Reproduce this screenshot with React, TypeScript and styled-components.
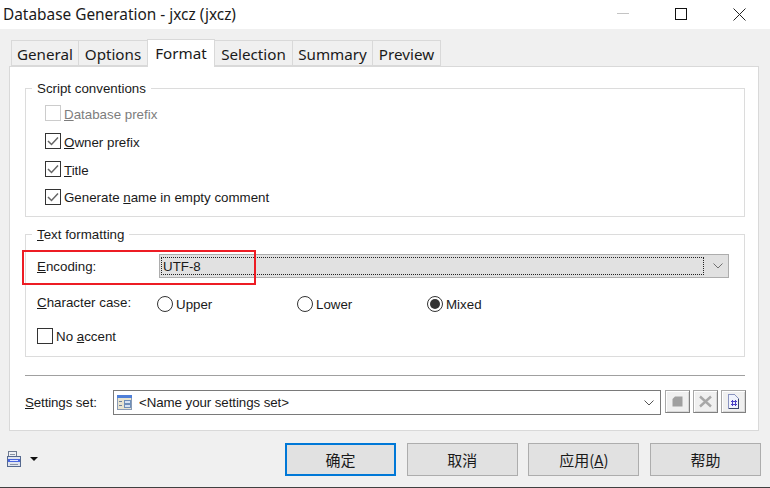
import { FC, ReactNode } from 'react'
import styled, { createGlobalStyle } from 'styled-components'

const GlobalStyle = createGlobalStyle`
    html, body {
        margin: 0;
        padding: 0;
        background: #f0f0f0;
    }
    * {
        box-sizing: border-box;
    }
`

const Dialog = styled.div`
    width: 770px;
    height: 488px;
    display: flex;
    flex-direction: column;
    background: #f0f0f0;
    border-bottom: 1px solid #404040;
    overflow: hidden;
    font-family: 'Liberation Sans', Arial, sans-serif;
    font-size: 13.33px;
    color: #1a1a1a;
`

const TitleBar = styled.div`
    height: 29px;
    flex: none;
    display: flex;
    align-items: center;
    justify-content: space-between;
    background: #fff;
    padding-left: 3px;
`

const TitleText = styled.div`
    font-family: 'Noto Sans', sans-serif;
    font-size: 15.4px;
    line-height: 26px;
    color: #1a1a1a;
`

const WindowButtons = styled.div`
    display: flex;
    align-items: center;
    gap: 46px;
    padding-right: 24px;
    margin-bottom: 1px;
`

const TabStrip = styled.div`
    display: flex;
    align-items: flex-end;
    height: 27px;
    margin-top: 10px;
    padding-left: 12px;
    flex: none;
`

const Tab = styled.div<{ $active?: boolean; $width: number }>`
    width: ${(p) => p.$width}px;
    height: ${(p) => (p.$active ? 28 : 26)}px;
    margin-bottom: ${(p) => (p.$active ? -1 : 0)}px;
    padding-bottom: ${(p) => (p.$active ? 1 : 0)}px;
    padding-top: ${(p) => (p.$active ? 0 : 2)}px;
    display: flex;
    align-items: center;
    justify-content: center;
    background: ${(p) => (p.$active ? '#fff' : '#f0f0f0')};
    border: 1px solid #d9d9d9;
    border-bottom: ${(p) => (p.$active ? 'none' : '1px solid #d9d9d9')};
    margin-left: -1px;
    position: relative;
    z-index: ${(p) => (p.$active ? 1 : 0)};
    font-family: 'Noto Sans', sans-serif;
    font-size: 15.2px;
    color: #1a1a1a;
`

const Panel = styled.div`
    height: 365px;
    flex: none;
    margin: 0 11px 0 9px;
    background: #fff;
    border: 1px solid #d9d9d9;
    padding: 14px 13px 0 15px;
`

const Group = styled.fieldset<{ $height: number }>`
    height: ${(p) => p.$height}px;
    margin: 0;
    padding: 0;
    border: 1px solid #dcdcdc;
    min-width: 0;
`

const GroupTitle = styled.legend`
    margin-left: 6px;
    padding: 0 5px;
    font-size: 13.33px;
    line-height: 15px;
    color: #1a1a1a;
`

const Stack = styled.div`
    display: flex;
    flex-direction: column;
    gap: 12px;
    padding: 9px 0 0 19px;
`

const CheckRow = styled.label<{ $disabled?: boolean }>`
    display: flex;
    align-items: center;
    gap: 3px;
    height: 16px;
    color: ${(p) => (p.$disabled ? '#7d7d7d' : '#1a1a1a')};
`

const CheckText = styled.span<{ $lift?: boolean }>`
    margin-top: ${(p) => (p.$lift ? 0 : 2)}px;
`

const Box = styled.span<{ $disabled?: boolean }>`
    width: 16px;
    height: 16px;
    flex: none;
    display: flex;
    align-items: center;
    justify-content: center;
    border: 1px solid ${(p) => (p.$disabled ? '#cccccc' : '#333333')};
    background: #fff;
`

const Spaced = styled.div`
    margin-top: 10px;
`

const SecondGroupBody = styled.div`
    padding: 12px 15px 0 11px;
    display: flex;
    flex-direction: column;
`

const EncodingRow = styled.div`
    display: flex;
    align-items: center;
    height: 24px;
`

const FieldLabel = styled.span<{ $width: number }>`
    width: ${(p) => p.$width}px;
    flex: none;
`

const EncodingCombo = styled.div`
    flex: 1;
    height: 24px;
    display: flex;
    align-items: center;
    background: #e1e1e1;
    border: 1px solid #adadad;
    padding: 2px 0 2px 1px;
`

const FocusBox = styled.div`
    flex: 1;
    height: 100%;
    display: flex;
    align-items: center;
    border: 1px dotted #222;
    padding-left: 1px;
    color: #1a1a1a;
`

const ArrowSlot = styled.div<{ $width: number; $shift?: number }>`
    width: ${(p) => p.$width}px;
    padding-left: ${(p) => p.$shift ?? 0}px;
    flex: none;
    display: flex;
    align-items: center;
    justify-content: center;
`

const CaseRow = styled.div`
    display: flex;
    align-items: center;
    height: 16px;
    margin-top: 18px;
`

const CaseLabel = styled.span`
    width: 120px;
    flex: none;
    margin-bottom: 4px;
`

const RadioOption = styled.label<{ $width: number }>`
    width: ${(p) => p.$width}px;
    flex: none;
    display: flex;
    align-items: center;
    gap: 3px;
`

const RadioCircle = styled.span`
    width: 16px;
    height: 16px;
    flex: none;
    border-radius: 50%;
    border: 1px solid #333;
    background: #fff;
    display: flex;
    align-items: center;
    justify-content: center;
`

const RadioDot = styled.span`
    width: 10px;
    height: 10px;
    border-radius: 50%;
    background: #333;
`

const AccentRow = styled(CheckRow)`
    margin-top: 16px;
`

const Divider = styled.div`
    height: 1px;
    margin-top: 18px;
    background: #a0a0a0;
`

const SettingsRow = styled.div`
    display: flex;
    align-items: flex-start;
    margin-top: 14px;
`

const SettingsLabel = styled.span`
    width: 88px;
    flex: none;
    line-height: 25px;
    letter-spacing: -0.12px;
`

const SettingsCombo = styled.div`
    width: 548px;
    height: 25px;
    flex: none;
    display: flex;
    align-items: center;
    background: #fff;
    border: 1px solid #7a7a7a;
    padding-left: 3px;
    gap: 7px;
`

const SettingsValue = styled.span`
    flex: 1;
    letter-spacing: -0.08px;
`

const ToolButtons = styled.div`
    display: flex;
    gap: 3px;
    margin-left: 4px;
`

const ToolButton = styled.div`
    width: 25px;
    height: 23px;
    display: flex;
    align-items: center;
    justify-content: center;
    background: #f0f0f0;
    border: 1px solid #a8a8a8;
    border-right-color: #808080;
    border-bottom-color: #808080;
    box-shadow: inset 1px 1px 0 #fff, inset -1px -1px 0 #d8d8d8;
`

const Footer = styled.div`
    flex: 1;
    display: flex;
    align-items: flex-start;
    padding: 12px 9px 0 7px;
`

const FooterMenu = styled.div`
    width: 278px;
    flex: none;
    display: flex;
    align-items: center;
    gap: 9px;
    height: 16px;
    margin-top: 8px;
`

const FooterButtons = styled.div`
    display: flex;
    gap: 10.67px;
`

const DialogButton = styled.div<{ $primary?: boolean }>`
    width: 111px;
    height: 33px;
    display: flex;
    align-items: center;
    justify-content: center;
    background: #e1e1e1;
    border: ${(p) => (p.$primary ? '2px solid #0078d7' : '1px solid #adadad')};
    font-family: 'Noto Sans CJK SC', sans-serif;
    font-size: 15px;
    line-height: 20px;
    color: #1a1a1a;
`

const Highlight = styled.div`
    position: absolute;
    left: 22px;
    top: 250px;
    width: 234px;
    height: 35px;
    border: 2px solid #ed1c24;
    pointer-events: none;
`

const Stage = styled.div`
    position: relative;
    width: 770px;
    height: 488px;
`

const Key = styled.u`
    text-underline-offset: 1px;
`

const Minimize = () => (
    <svg width="12" height="12" viewBox="0 0 12 12">
        <path d="M0 5.5H12" stroke="#c4c4c4" strokeWidth="1" />
    </svg>
)

const Maximize = () => (
    <svg width="12" height="12" viewBox="0 0 12 12">
        <rect x="0.5" y="0.5" width="11" height="11" fill="none" stroke="#111" />
    </svg>
)

const Close = () => (
    <svg width="13" height="13" viewBox="0 0 13 13">
        <path d="M0.5 0.5L12.5 12.5M12.5 0.5L0.5 12.5" stroke="#222" strokeWidth="1" />
    </svg>
)

const Tick = () => (
    <svg width="12" height="10" viewBox="0 0 12 10">
        <path d="M1 5L4.5 8.5L11 1.5" fill="none" stroke="#666" strokeWidth="1.5" />
    </svg>
)

const Chevron: FC<{ color: string }> = ({ color }) => (
    <svg width="10" height="6" viewBox="0 0 10 6">
        <path d="M0.5 0.5L5 5L9.5 0.5" fill="none" stroke={color} strokeWidth="1" />
    </svg>
)

const SettingsIcon = () => (
    <svg width="15" height="15" viewBox="0 0 15 15" shapeRendering="crispEdges">
        <rect x="0" y="0" width="15" height="15" fill="#e8e4d0" />
        <rect x="0" y="0" width="15" height="3" fill="#4f7fd8" />
        <rect x="0" y="3" width="1" height="12" fill="#8a9bb5" />
        <rect x="14" y="3" width="1" height="12" fill="#8a9bb5" />
        <rect x="0" y="14" width="15" height="1" fill="#8a9bb5" />
        <rect x="2" y="6" width="3" height="1" fill="#6b7f9e" />
        <rect x="2" y="10" width="3" height="1" fill="#6b7f9e" />
        <rect x="7" y="5" width="6" height="3" fill="#d6e2f2" stroke="#6f8fb8" />
        <rect x="7" y="9" width="6" height="3" fill="#d6e2f2" stroke="#6f8fb8" />
    </svg>
)

const SaveIcon = () => (
    <svg width="11" height="11" viewBox="0 0 11 11">
        <path d="M3 0.5H10.5V10.5H0.5V3Z" fill="#a0a0a0" />
    </svg>
)

const DeleteIcon = () => (
    <svg width="13" height="13" viewBox="0 0 13 13">
        <path d="M1 1.5L12 11.5M12 1.5L1 11.5" stroke="#a8a8a8" strokeWidth="2.4" />
    </svg>
)

const ScriptIcon = () => (
    <svg width="13" height="15" viewBox="0 0 13 15" shapeRendering="crispEdges">
        <path d="M1.5 0.5H7.5L11.5 4.5V14.5H1.5Z" fill="#f0f3fc" stroke="#8a94c0" />
        <path d="M11.5 5V14.5H2" fill="none" stroke="#3a4468" />
        <path d="M5 6V12M8 6V12M3.5 7.5H10M3.5 10.5H10" stroke="#4a3fc4" strokeWidth="1" fill="none" />
    </svg>
)

const PrintIcon = () => (
    <svg width="14" height="16" viewBox="0 0 14 16" shapeRendering="crispEdges">
        <rect x="1.5" y="0.5" width="8" height="5" fill="#eef0f4" stroke="#6e7a90" />
        <rect x="0.5" y="5.5" width="13" height="10" fill="#dfe4ee" stroke="#55698f" />
        <rect x="1" y="8" width="12" height="3" fill="#4a66e0" />
        <rect x="3" y="9" width="8" height="1" fill="#dfe4ff" />
        <rect x="3" y="3" width="5" height="1" fill="#8a93a5" />
        <rect x="3" y="13" width="8" height="1" fill="#8a93a5" />
    </svg>
)

const DropArrow = () => (
    <svg width="8" height="4" viewBox="0 0 8 4">
        <path d="M0 0H8L4 4Z" fill="#111" />
    </svg>
)

const CheckItem: FC<{ checked?: boolean; disabled?: boolean; lift?: boolean; children: ReactNode }> = ({
    checked,
    disabled,
    lift,
    children,
}) => (
    <CheckRow $disabled={disabled}>
        <Box $disabled={disabled}>{checked && <Tick />}</Box>
        <CheckText $lift={lift}>{children}</CheckText>
    </CheckRow>
)

const tabs = [
    { name: 'General', width: 68 },
    { name: 'Options', width: 70 },
    { name: 'Format', width: 68, active: true },
    { name: 'Selection', width: 79 },
    { name: 'Summary', width: 81 },
    { name: 'Preview', width: 69 },
]

const App: FC = () => (
    <Stage>
        <GlobalStyle />
        <Dialog>
            <TitleBar>
                <TitleText>Database Generation - jxcz (jxcz)</TitleText>
                <WindowButtons>
                    <Minimize />
                    <Maximize />
                    <Close />
                </WindowButtons>
            </TitleBar>

            <TabStrip>
                {tabs.map((t) => (
                    <Tab key={t.name} $width={t.width} $active={t.active}>
                        {t.name}
                    </Tab>
                ))}
            </TabStrip>

            <Panel>
                <Group $height={136}>
                    <GroupTitle>Script conventions</GroupTitle>
                    <Stack>
                        <CheckItem disabled>
                            <Key>D</Key>atabase prefix
                        </CheckItem>
                        <CheckItem checked>
                            <Key>O</Key>wner prefix
                        </CheckItem>
                        <CheckItem checked>
                            <Key>T</Key>itle
                        </CheckItem>
                        <CheckItem checked lift>
                            Generate <Key>n</Key>ame in empty comment
                        </CheckItem>
                    </Stack>
                </Group>

                <Spaced>
                    <Group $height={130}>
                        <GroupTitle>
                            <Key>T</Key>ext formatting
                        </GroupTitle>
                        <SecondGroupBody>
                            <EncodingRow>
                                <FieldLabel $width={122}>
                                    <Key>E</Key>ncoding:
                                </FieldLabel>
                                <EncodingCombo>
                                    <FocusBox>UTF-8</FocusBox>
                                    <ArrowSlot $width={24} $shift={3}>
                                        <Chevron color="#707070" />
                                    </ArrowSlot>
                                </EncodingCombo>
                            </EncodingRow>
                            <CaseRow>
                                <CaseLabel>
                                    <Key>C</Key>haracter case:
                                </CaseLabel>
                                <RadioOption $width={140}>
                                    <RadioCircle />
                                    Upper
                                </RadioOption>
                                <RadioOption $width={130}>
                                    <RadioCircle />
                                    Lower
                                </RadioOption>
                                <RadioOption $width={100}>
                                    <RadioCircle>
                                        <RadioDot />
                                    </RadioCircle>
                                    Mixed
                                </RadioOption>
                            </CaseRow>
                            <AccentRow>
                                <Box />
                                <span>
                                    No <Key>a</Key>ccent
                                </span>
                            </AccentRow>
                        </SecondGroupBody>
                    </Group>
                </Spaced>

                <Divider />

                <SettingsRow>
                    <SettingsLabel>
                        <Key>S</Key>ettings set:
                    </SettingsLabel>
                    <SettingsCombo>
                        <SettingsIcon />
                        <SettingsValue>&lt;Name your settings set&gt;</SettingsValue>
                        <ArrowSlot $width={22}>
                            <Chevron color="#555" />
                        </ArrowSlot>
                    </SettingsCombo>
                    <ToolButtons>
                        <ToolButton>
                            <SaveIcon />
                        </ToolButton>
                        <ToolButton>
                            <DeleteIcon />
                        </ToolButton>
                        <ToolButton>
                            <ScriptIcon />
                        </ToolButton>
                    </ToolButtons>
                </SettingsRow>
            </Panel>

            <Footer>
                <FooterMenu>
                    <PrintIcon />
                    <DropArrow />
                </FooterMenu>
                <FooterButtons>
                    <DialogButton $primary>确定</DialogButton>
                    <DialogButton>取消</DialogButton>
                    <DialogButton>
                        应用(<Key>A</Key>)
                    </DialogButton>
                    <DialogButton>帮助</DialogButton>
                </FooterButtons>
            </Footer>
        </Dialog>
        <Highlight />
    </Stage>
)

export default App
